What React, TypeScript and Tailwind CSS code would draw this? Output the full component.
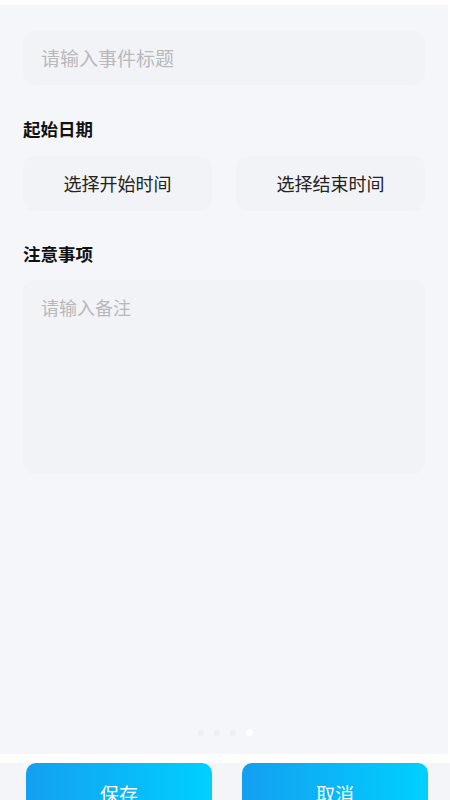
import React from 'react';

const font = { fontFamily: '"Noto Sans CJK SC", "Noto Sans", sans-serif' };

export default function App() {
  return (
    <div className="w-[450px] h-[800px] overflow-hidden flex flex-col bg-white" style={font}>
      <div className="h-[5px] bg-white" />
      {/* form panel */}
      <div className="flex-1 flex flex-col bg-[#f5f6fa] px-[23px] pt-[26px] mr-[2px]">
        <div className="h-[54px] rounded-xl bg-[#f2f3f6] flex items-center px-[18px]">
          <span className="text-[19px] text-[#b8b8bb]">请输入事件标题</span>
        </div>

        <div className="mt-[32px] text-[17.5px] font-bold text-[#111] leading-6">起始日期</div>
        <div className="mt-[15px] flex gap-6">
          <div className="flex-1 h-[55px] rounded-xl bg-[#f2f3f6] flex items-center justify-center text-[18px] text-[#222]">
            选择开始时间
          </div>
          <div className="flex-1 h-[55px] rounded-xl bg-[#f2f3f6] flex items-center justify-center text-[18px] text-[#222]">
            选择结束时间
          </div>
        </div>

        <div className="mt-[31px] text-[17.5px] font-bold text-[#111] leading-6">注意事项</div>
        <div className="mt-[14px] h-[194px] rounded-xl bg-[#f2f3f6] px-[18px] pt-[14px]">
          <span className="text-[18px] text-[#b8b8bb]">请输入备注</span>
        </div>

        {/* pager dots */}
        <div className="mt-auto mb-[18px] flex items-center justify-center gap-[10px] pl-[2px]">
          <span className="w-[6px] h-[6px] rounded-full bg-[#eef0f5]" />
          <span className="w-[6px] h-[6px] rounded-full bg-[#eef0f5]" />
          <span className="w-[6px] h-[6px] rounded-full bg-[#eef0f5]" />
          <span className="w-[7px] h-[7px] rounded-full bg-white" />
        </div>
      </div>
      <div className="h-[9px] bg-white" />
      {/* bottom actions */}
      <div className="h-[37px] bg-[#f4f5f9] flex gap-[30px] pl-[26px] pr-[22px] overflow-hidden">
        <button className="flex-1 h-[50px] rounded-[10px] bg-gradient-to-r from-[#139ff0] to-[#00d0ff] text-white text-[19px] pt-[17px] flex justify-center items-start">
          保存
        </button>
        <button className="flex-1 h-[50px] rounded-[10px] bg-gradient-to-r from-[#139ff0] to-[#00d0ff] text-white text-[19px] pt-[17px] flex justify-center items-start">
          取消
        </button>
      </div>
    </div>
  );
}
